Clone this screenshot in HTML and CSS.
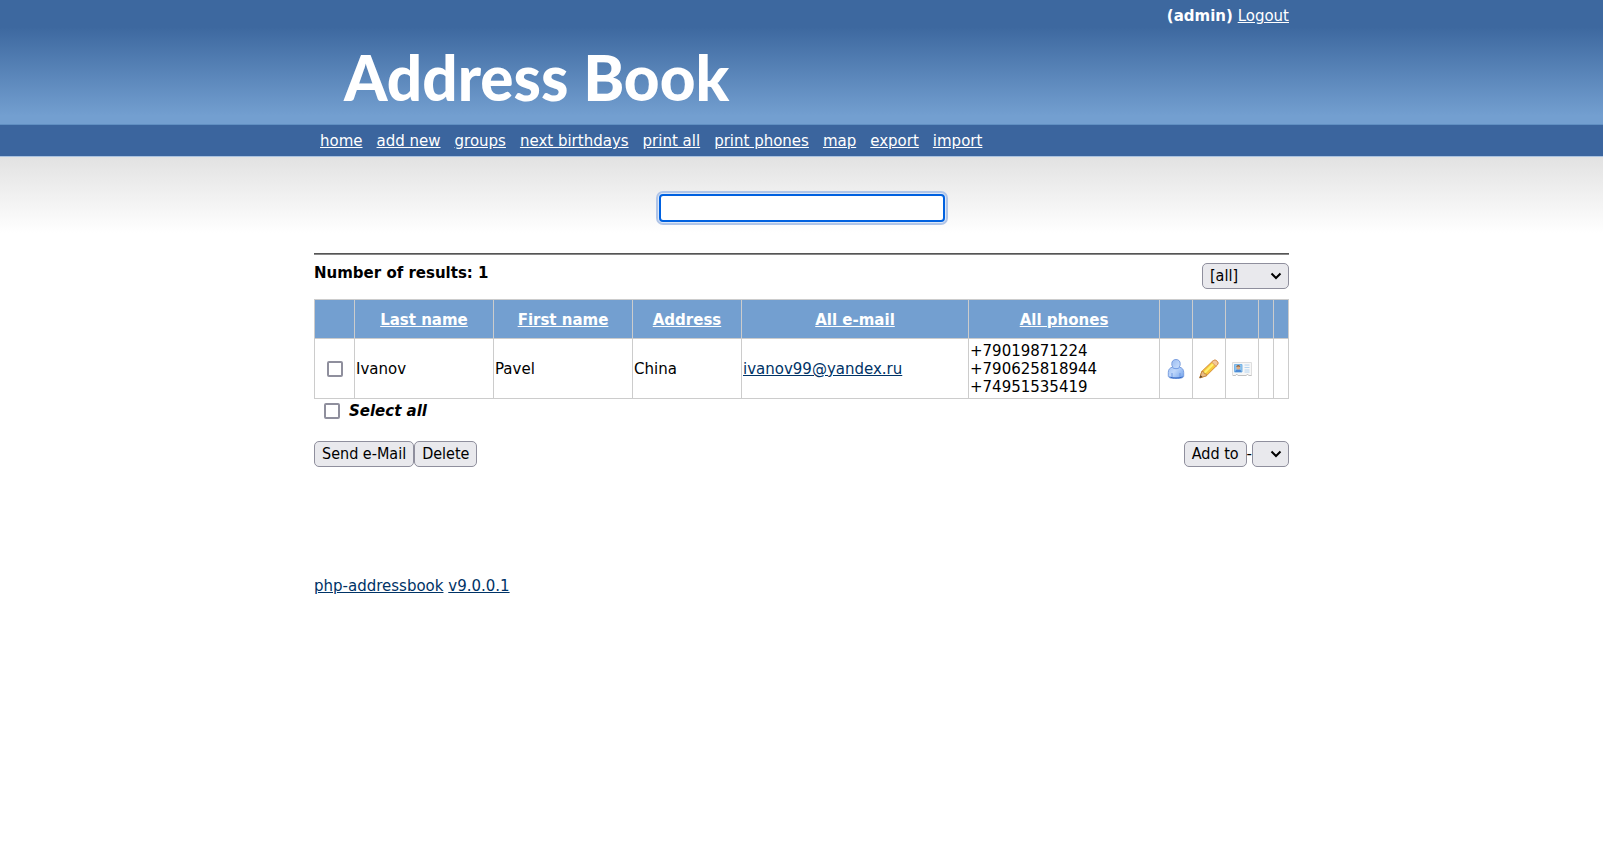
FILE: index.html
```html
<!DOCTYPE html>
<html lang="en">
<head>
<meta charset="utf-8">
<title>Address Book</title>
<link rel="stylesheet" href="styles.css">
</head>
<body>
<header class="banner">
  <div class="wrap">
    <div class="account"><b>(admin)</b> <a href="#">Logout</a></div>
    <h1 class="logo">Address Book</h1>
  </div>
</header>
<nav class="nav">
  <ul class="wrap nav-list">
    <li><a href="#">home</a></li>
    <li><a href="#">add new</a></li>
    <li><a href="#">groups</a></li>
    <li><a href="#">next birthdays</a></li>
    <li><a href="#">print all</a></li>
    <li><a href="#">print phones</a></li>
    <li><a href="#">map</a></li>
    <li><a href="#">export</a></li>
    <li><a href="#">import</a></li>
  </ul>
</nav>
<main class="content">
  <div class="wrap">
    <form class="search"><input class="search-box" type="text" aria-label="Search"></form>
    <hr class="rule">
    <div class="summary">
      <label for="group"><b>Number of results: 1</b></label>
      <span class="picker">
        <select id="group" class="control group-select"><option>[all]</option></select>
        <svg class="arrow" viewBox="0 0 12 8" aria-hidden="true"><path d="M1.500 1.500 6 6l4.500-4.500"/></svg>
      </span>
    </div>
    <table class="entries">
      <colgroup>
        <col class="c-tick"><col class="c-last"><col class="c-first"><col class="c-address"><col class="c-mail"><col class="c-phones">
        <col class="c-icon"><col class="c-icon"><col class="c-icon"><col class="c-blank"><col class="c-blank">
      </colgroup>
      <thead>
        <tr>
          <th></th>
          <th><a href="#">Last name</a></th>
          <th><a href="#">First name</a></th>
          <th><a href="#">Address</a></th>
          <th><a href="#">All e-mail</a></th>
          <th><a href="#">All phones</a></th>
          <th></th><th></th><th></th><th></th><th></th>
        </tr>
      </thead>
      <tbody>
        <tr>
          <td class="center"><input class="tick" type="checkbox" aria-label="Select Ivanov Pavel"></td>
          <td>Ivanov</td>
          <td>Pavel</td>
          <td>China</td>
          <td><a href="#">ivanov99@yandex.ru</a></td>
          <td>+79019871224<br>+790625818944<br>+74951535419</td>
          <td class="center"><a href="#" aria-label="Details">
            <svg class="icon" viewBox="0 0 20 20">
              <defs><linearGradient id="person" x1="0" y1="0" x2="1" y2="1"><stop offset="0" stop-color="#8fb3ee"/><stop offset=".5" stop-color="#c0d8fb"/><stop offset="1" stop-color="#6fa0ea"/></linearGradient></defs>
              <path d="M10 .5c2.700 0 4.200 1.800 4.200 4.200 0 1.400-.2 2.400-.9 3.300 2.900.8 4.400 2.500 4.400 5.300v3.600c0 1.900-2.800 2.600-7.700 2.600s-7.700-.7-7.700-2.600v-3.600c0-2.800 1.500-4.500 4.400-5.300-.7-.9-.9-1.900-.9-3.300C5.800 2.300 7.300.5 10 .5z" fill="url(#person)" stroke="#7b9fdf"/>
              <path d="M6.500 8.600c2 1.500 5 1.500 7 0M6 14v4.500M14 14v4.500" fill="none" stroke="#6e98e2"/>
              <path d="M3.500 17.800c2 1.500 11 1.500 13 0" fill="none" stroke="#3468c4"/>
            </svg></a></td>
          <td class="center"><a href="#" aria-label="Edit">
            <svg class="icon" viewBox="0 0 20 20">
              <path d="M14 1.800c1.300-1 3-.8 4.100.3s1.100 2.600.2 3.900L7.500 16.700.8 18.900 2.800 12.400z" fill="#f7c83c" stroke="#d58e3b"/>
              <path d="m4.500 13.200 9.800-9.800 1.500 1.500L6 14.700z" fill="#fff26e"/>
              <path d="m12.700 3.100 1.500-1.300c1.200-1 2.800-.7 3.900.4s1.100 2.600.2 3.800l-1.400 1.300z" fill="#f3c79b" stroke="#d99860"/>
              <path d="m2.800 12.400 2 .5.400 1.800 2 .2.300 1.800-6.700 2.200z" fill="#e9bd86" stroke="#b97930" stroke-width=".7"/>
              <path d="m1.600 16.300 1.900 1.800-2.900 1z" fill="#59442d"/>
            </svg></a></td>
          <td class="center"><a href="#" aria-label="vCard">
            <svg class="icon" viewBox="0 0 20 20">
              <path d="M.5 3.500h19v13h-2.700l-1.300-1.300-1.300 1.300H6l-1.300-1.300-1.300 1.300H.5z" fill="#f7f7f7" stroke="#dedede"/>
              <path d="M1 16.500h2.500l1.200-1.300L6 16.500h8.200l1.300-1.300 1.300 1.300h2.700" fill="none" stroke="#c2c2c2"/>
              <path d="M2.500 5.500h7.500v7.500H2.500z" fill="#8cc4f0" stroke="#78b4e6"/>
              <path d="M3 13c.3-2 1.500-2.500 3.300-2.500S9.300 11 9.600 13z" fill="#4d8ad4"/>
              <circle cx="6.300" cy="8.700" r="1.900" fill="#e0ac80"/><path d="M4.300 8c0-2.700 4-2.700 4 0-1.300-.7-2.700-.7-4 0z" fill="#8a6040"/>
              <path d="M12.500 6h5M12.500 8.500h5M12.500 11h5M12.500 13h5" stroke="#b4d4f0"/>
            </svg></a></td>
          <td></td><td></td>
        </tr>
      </tbody>
    </table>
    <div class="select-all"><input id="all" class="tick" type="checkbox"><label for="all">Select all</label></div>
    <div class="actions">
      <div class="group"><button class="control" type="button">Send e-Mail</button><button class="control" type="button">Delete</button></div>
      <div class="group"><button class="control" type="button">Add to</button><label for="target">-</label><span class="picker"><select id="target" class="control target-select"><option></option></select><svg class="arrow" viewBox="0 0 12 8" aria-hidden="true"><path d="M1.500 1.500 6 6l4.500-4.500"/></svg></span></div>
    </div>
    <footer class="footer"><a href="#">php-addressbook</a> <a href="#">v9.0.0.1</a></footer>
  </div>
</main>
</body>
</html>
```
FILE: styles.css
```css
* { box-sizing: border-box; }
body {
  margin: 0;
  background: #fff;
  color: #000;
  font: 15px/18px Verdana, "DejaVu Sans", sans-serif;
}
a { color: #036; }
.wrap { width: 100%; max-width: 975px; margin: 0 auto; }
.banner {
  height: 125px;
  background: linear-gradient(#3d689f 27px, #739fd0 116px);
  border-bottom: 1px solid #608fc2;
  color: #fff;
}
.banner a, .nav a, th a { color: #fff; }
.account { padding-top: 7px; text-align: right; }
.logo {
  margin: 16px 0 0 30px;
  font: 900 62px/72px Lato, sans-serif;
}
.nav {
  background: #3b659e;
  border-bottom: 1px solid #a9c2e0;
}
.nav-list {
  display: flex;
  flex-wrap: wrap;
  gap: 0 14px;
  padding: 7px 6px 6px;
  list-style: none;
}
.content {
  background: linear-gradient(#e2e2e2, #fff 76px);
}
.search { display: flex; justify-content: center; padding-top: 37px; }
.search-box {
  width: 286px;
  height: 28px;
  border: 2px solid #0061e0;
  border-radius: 4px;
  outline: 2px solid #b0c5e8;
  outline-offset: 1px;
  box-shadow: 0 0 0 1px #dce7f7;
  background: #fff;
  font: 16px "DejaVu Sans Condensed", sans-serif;
}
.rule {
  margin: 31px 0 8px;
  border: 0;
  border-top: 1px solid #555;
  border-bottom: 1px solid #888;
}
.summary { display: flex; justify-content: space-between; margin-bottom: 10px; }
.summary label { padding-top: 1px; }
.control {
  height: 26px;
  margin: 0;
  padding: 0 7px;
  border: 1px solid #8f8f9d;
  border-radius: 5px;
  background: #e9e9ed;
  color: #000;
  font: 16px/24px "DejaVu Sans Condensed", sans-serif;
}
.picker { position: relative; display: block; height: 26px; }
.picker select { appearance: none; }
.group-select { width: 87px; }
.target-select { width: 37px; }
.arrow {
  position: absolute;
  right: 7px;
  top: 9px;
  width: 12px;
  height: 8px;
  fill: none;
  stroke: #000;
  stroke-width: 2;
  pointer-events: none;
}
.entries { width: 100%; table-layout: fixed; border-collapse: collapse; }
.entries th, .entries td { border: 1px solid #ccc; }
.entries th { height: 39px; padding: 1px 0 0; background: #739fd0; }
.entries td { height: 60px; padding: 2px 1px; }
.entries td.center { padding: 0; text-align: center; }
.c-tick { width: 40px; }
.c-last, .c-first { width: 139px; }
.c-address { width: 109px; }
.c-phones { width: 191px; }
.c-icon { width: 33px; }
.c-blank { width: 15px; }
.tick {
  appearance: none;
  width: 16px;
  height: 16px;
  margin: 0;
  border: 2px solid #8f8f9d;
  border-radius: 2px;
  background: #fff;
  vertical-align: middle;
}
.icon { display: block; width: 20px; height: 20px; margin: 0 auto; }
.select-all {
  display: flex;
  align-items: center;
  gap: 9px;
  padding: 3px 10px;
  font-weight: bold;
  font-style: italic;
}
.actions { display: flex; justify-content: space-between; margin-top: 18px; }
.group { display: flex; align-items: center; }
.footer { padding: 110px 0 24px; }
```
